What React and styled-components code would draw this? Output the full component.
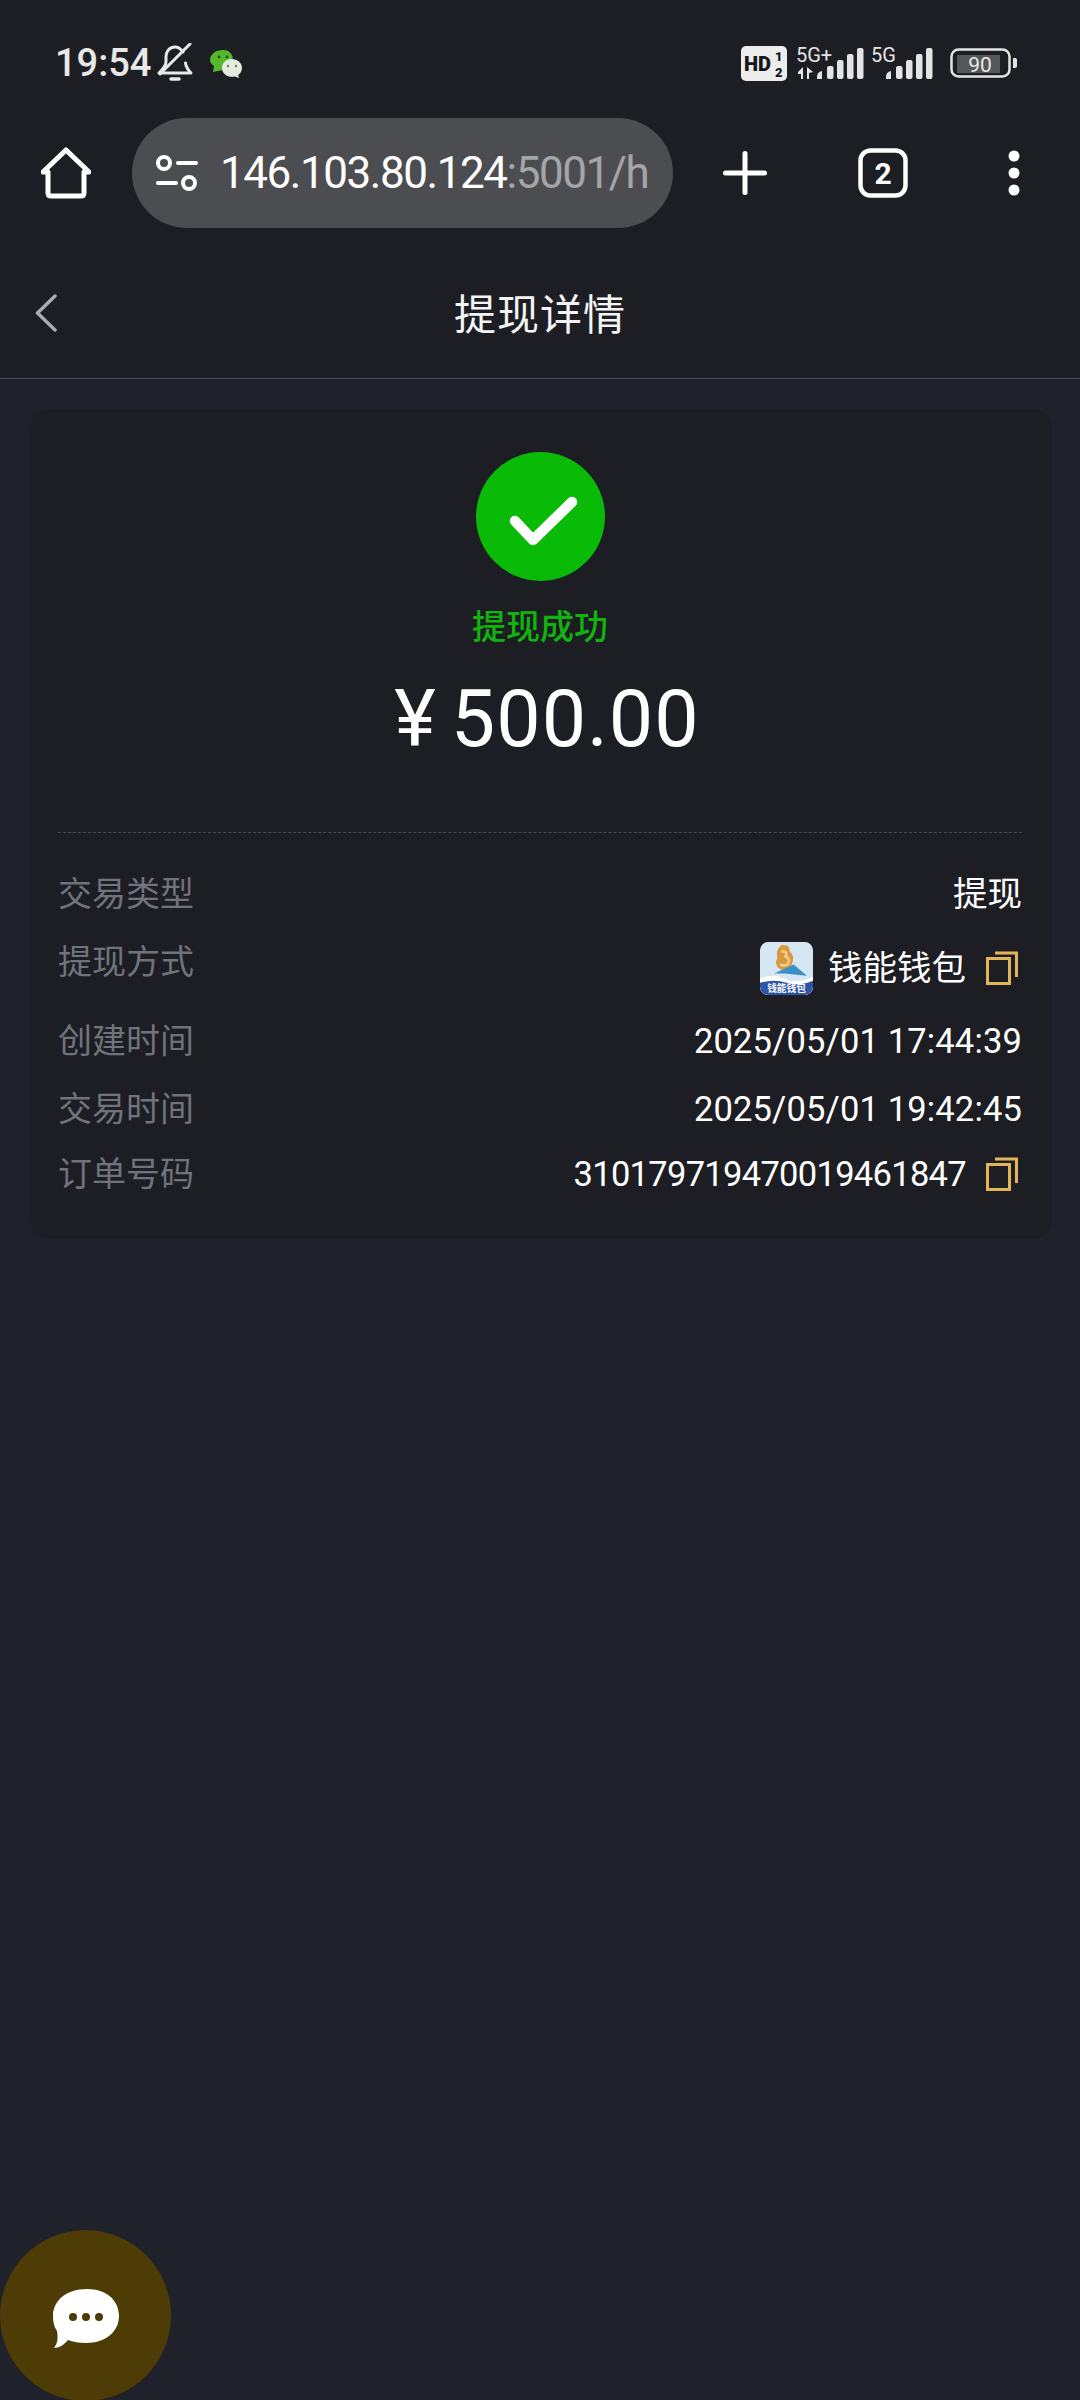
import React from 'react'
import styled, { createGlobalStyle } from 'styled-components'

const GlobalStyle = createGlobalStyle`
  html, body {
    margin: 0;
    padding: 0;
    background: #1f222a;
  }
  * {
    box-sizing: border-box;
  }
`

//스타일
const Page = styled.div`
  position: relative;
  width: 1080px;
  height: 2400px;
  overflow: hidden;
  background: #1f222a;
  color: #fff;
  font-family: Roboto, "Noto Sans CJK SC", sans-serif;
`
const TopChrome = styled.div`
  background: #1c1e23;
`
const StatusBar = styled.div`
  height: 118px;
  padding: 40px 62px 0 55px;
  display: flex;
  justify-content: space-between;
  align-items: flex-start;
`
const StatusLeft = styled.div`
  display: flex;
  align-items: center;
  gap: 6px;
  height: 46px;
`
const Clock = styled.span`
  font-size: 38px;
  font-weight: 500;
  color: #e8e8e8;
`
const WeChatSlot = styled.span`
  display: flex;
  margin-left: 10px;
  margin-top: 2px;
`
const StatusRight = styled.div`
  display: flex;
  align-items: flex-start;
  height: 46px;
  padding-top: 6px;
`
const StatusGlyph = styled.svg`
  flex-shrink: 0;
  overflow: visible;
  margin-left: ${p => p.$ml || 0}px;
  margin-top: ${p => p.$mt || 0}px;
`
const UrlToolbar = styled.div`
  height: 110px;
  display: flex;
  align-items: center;
  padding-left: 41px;
`
const IconSlot = styled.div`
  width: ${p => p.$w}px;
  display: flex;
  justify-content: center;
  align-items: center;
  flex-shrink: 0;
`
const AddressPill = styled.div`
  width: 541px;
  height: 110px;
  margin-left: 41px;
  padding: 0 20px 0 24px;
  border-radius: 55px;
  background: #4c4d51;
  display: flex;
  align-items: center;
  gap: 22px;
  overflow: hidden;
  svg {
    flex-shrink: 0;
  }
`
const UrlText = styled.span`
  font-size: 44px;
  white-space: nowrap;
  color: #fff;
  letter-spacing: -1.45px;
  span {
    color: #a4a5a8;
  }
`
const TitleBar = styled.div`
  height: 151px;
  padding-top: 16px;
  display: flex;
  align-items: center;
  justify-content: center;
  position: relative;
  border-bottom: 1px solid #4b4d52;
`
const BackBtn = styled.div`
  position: absolute;
  left: 35px;
  top: 66px;
  display: flex;
`
const Title = styled.h1`
  margin: 0;
  font-size: 42px;
  font-weight: 400;
  color: #f4f4f4;
  letter-spacing: 1px;
`
const Card = styled.section`
  margin: 30px 28px 0 30px;
  height: 830px;
  padding: 43px 30px 0 28px;
  border-radius: 20px;
  background: #1c1e23;
  display: flex;
  flex-direction: column;
`
const Hero = styled.div`
  display: flex;
  flex-direction: column;
  align-items: center;
  height: 381px;
  border-bottom: 1px dashed #494c52;
`
const SuccessIcon = styled.div`
  width: 129px;
  height: 129px;
  border-radius: 50%;
  background: #09bb07;
  display: flex;
`
const StatusText = styled.div`
  margin-top: 24px;
  font-size: 34px;
  font-weight: 500;
  line-height: 44px;
  color: #12b30e;
`
const Amount = styled.div`
  margin: 25px 0 0 14px;
  font-size: 79px;
  line-height: 90px;
  color: #fff;
  display: flex;
  align-items: baseline;
  gap: 14px;
  letter-spacing: 1px;
`
const Rows = styled.div`
  display: flex;
  flex-direction: column;
  padding-top: 28px;
`
const Row = styled.div`
  display: flex;
  justify-content: space-between;
  align-items: center;
  height: ${p => p.$h}px;
`
const Label = styled.span`
  font-size: 34px;
  line-height: 46px;
  color: #70737b;
  margin-top: ${p => p.$lift || 0}px;
`
const Value = styled.span`
  display: flex;
  align-items: center;
  gap: 20px;
  font-size: 34.5px;
  line-height: 46px;
  color: #fff;
  letter-spacing: ${p => p.$track || 0}px;
`
const LogoWrap = styled.span`
  display: flex;
  margin-right: -5px;
`
const CopyBtn = styled.span`
  display: flex;
  width: 32px;
  height: 34px;
  margin: 0 4px 0 0;
`
const Fab = styled.div`
  position: absolute;
  left: 0;
  top: 2230px;
  width: 171px;
  height: 171px;
  border-radius: 50%;
  background: #4e3c06;
  padding-top: 6px;
  display: flex;
  align-items: center;
  justify-content: center;
`

const BellOff = () => (
  <svg width="36" height="40" viewBox="0 0 36 40" fill="none" stroke="#e8e8e8" strokeWidth="3" strokeLinejoin="round" strokeLinecap="round">
    <path d="M26 9 C24 6 21 4 18 4 C12 4 9 9 9 14 V19 C9 23 6 26 2 30 H34 C31 27 29 24 28.500 20" />
    <path d="M3 31 L33 1" />
    <path d="M14 36 H22" strokeWidth="3.500" />
  </svg>
)

const WeChatDots = () => (
  <svg width="34" height="30" viewBox="0 0 34 30">
    <path d="M14 1 C21 1 24 6 24 11 C24 17 19 21 14 21 L4 23 L5 17 C2 15 1 13 1 11 C1 5 7 1 14 1 Z" fill="#55b82c" />
    <circle cx="10" cy="8" r="1.400" fill="#23501a" />
    <circle cx="18" cy="8" r="1.400" fill="#23501a" />
    <path d="M22 10 C29 10 33 14 33 19 C33 22 31 25 29 26 L30 29 L26 27.500 C19 29 13 25 13 19 C13 14 17 10 22 10 Z" fill="#e4eade" />
    <circle cx="19" cy="17" r="1.200" fill="#6f7a68" />
    <circle cx="27" cy="17" r="1.200" fill="#6f7a68" />
  </svg>
)

const HdBadge = () => (
  <StatusGlyph width="46" height="35" viewBox="0 0 46 35">
    <rect width="46" height="35" rx="5" fill="#ececec" />
    <text x="3" y="25" fontFamily="Roboto" fontWeight="900" fontSize="20" fill="#15161a">HD</text>
    <text x="34" y="15" fontFamily="Roboto" fontWeight="900" fontSize="13" fill="#15161a">1</text>
    <text x="34" y="31" fontFamily="Roboto" fontWeight="900" fontSize="13" fill="#15161a">2</text>
  </StatusGlyph>
)

const Bars = ({ x = 0 }) => (
  <g fill="#e4e4e4">
    <path d={`M${x} 34 q0 -5 5 -6 v8 h-5 z`} />
    <rect x={x + 10} y="23" width="6.500" height="13" rx="2" />
    <rect x={x + 20} y="17" width="6.500" height="19" rx="2" />
    <rect x={x + 30} y="11" width="6.500" height="25" rx="2" />
    <rect x={x + 40} y="5" width="6.500" height="31" rx="2" />
  </g>
)

const SignalOne = () => (
  <StatusGlyph width="68" height="40" viewBox="0 0 68 40" $ml={9} $mt={-3}>
    <text x="0" y="19" fontFamily="Roboto" fontSize="20" fill="#e4e4e4">5G+</text>
    <path d="M2 29 L7 24 V36 H5 V31 H2 Z M11 24 V36 H13 V30 L17 29 Z" fill="#e4e4e4" />
    <Bars x={21} />
  </StatusGlyph>
)

const SignalTwo = () => (
  <StatusGlyph width="62" height="40" viewBox="0 0 62 40" $ml={7} $mt={-3}>
    <text x="0" y="19" fontFamily="Roboto" fontSize="20" fill="#e4e4e4">5G</text>
    <Bars x={15} />
  </StatusGlyph>
)

const Battery = () => (
  <StatusGlyph width="68" height="32" viewBox="0 0 68 32" $ml={17} $mt={2}>
    <rect x="1.500" y="1.500" width="58" height="27" rx="7" fill="none" stroke="#e4e4e4" strokeWidth="2.500" />
    <rect x="7" y="7" width="43" height="18" fill="#55565a" />
    <text x="30" y="24" textAnchor="middle" fontFamily="Roboto" fontSize="21" fill="#e8e8e8">90</text>
    <path d="M63 10 h2 q2 0 2 2 v6 q0 2 -2 2 h-2 z" fill="#e4e4e4" />
  </StatusGlyph>
)

const HomeIcon = () => (
  <svg width="50" height="52" viewBox="0 0 50 52" fill="none" stroke="#fff" strokeWidth="5" strokeLinejoin="round" strokeLinecap="round">
    <path d="M2 25 L25 3 L48 25 H43 V46 Q43 49 40 49 H10 Q7 49 7 46 V25 Z" />
  </svg>
)

const SiteSettings = () => (
  <svg width="42" height="36" viewBox="0 0 42 36" fill="none" stroke="#fff" strokeWidth="4">
    <circle cx="8" cy="8" r="6" />
    <path d="M22 8 H40" strokeLinecap="round" />
    <circle cx="33" cy="28" r="6" />
    <path d="M2 28 H20" strokeLinecap="round" />
  </svg>
)

const PlusIcon = () => (
  <svg width="44" height="44" viewBox="0 0 44 44" stroke="#fff" strokeWidth="5" strokeLinecap="round">
    <path d="M22 2.500 V41.500 M2.500 22 H41.500" />
  </svg>
)

const TabsIcon = () => (
  <svg width="50" height="50" viewBox="0 0 50 50">
    <rect x="2.500" y="2.500" width="45" height="45" rx="10" fill="none" stroke="#fff" strokeWidth="4.500" />
    <text x="25" y="36" textAnchor="middle" fontFamily="Roboto" fontWeight="700" fontSize="30" fill="#fff">2</text>
  </svg>
)

const MoreIcon = () => (
  <svg width="12" height="46" viewBox="0 0 12 46" fill="#fff">
    <circle cx="6" cy="6" r="5.500" />
    <circle cx="6" cy="23" r="5.500" />
    <circle cx="6" cy="40" r="5.500" />
  </svg>
)

const BackIcon = () => (
  <svg width="22" height="38" viewBox="0 0 22 38" fill="none" stroke="#a9abae" strokeWidth="3.500" strokeLinecap="round" strokeLinejoin="round">
    <path d="M20 2 L2.500 19 L20 36" />
  </svg>
)

const CheckMark = () => (
  <svg width="129" height="129" viewBox="0 0 129 129" fill="none" stroke="#fff" strokeWidth="10.500" strokeLinecap="round" strokeLinejoin="round">
    <path d="M39 69 L57 88 L96 50" />
  </svg>
)

const CopyIcon = () => (
  <svg width="32" height="34" viewBox="0 0 32 34" fill="none" stroke="#e3b55a" strokeWidth="3">
    <rect x="1.500" y="7.500" width="22" height="25" />
    <path d="M9 2 H30.500 V26" />
  </svg>
)

// 钱包 앱 아이콘
const WalletLogo = () => (
  <svg width="53" height="53" viewBox="0 0 52 52">
    <defs>
      <clipPath id="logo-clip">
        <rect width="52" height="52" rx="8" />
      </clipPath>
    </defs>
    <g clipPath="url(#logo-clip)">
      <rect width="52" height="52" fill="#d6e7f4" />
      <path d="M21 3 Q30 2 29 9 Q35 14 31 22 Q29 29 20 27 Q13 22 17 16 Q15 8 21 3 Z" fill="#d99a3e" />
      <path d="M21 9 Q28 9 25 14 Q31 17 27 22 Q23 24 20 22" fill="none" stroke="#f5d08a" strokeWidth="2.500" />
      <path d="M14 31 L33 22 L46 33 L24 31 Z" fill="#3a8fc9" />
      <path d="M0 36 Q12 30 24 36 T52 34 V52 H0 Z" fill="#fff" />
      <path d="M0 40 Q14 36 26 40 T52 38 V52 H0 Z" fill="#2c55a8" />
      <text x="26" y="49.500" textAnchor="middle" fontFamily="Noto Sans CJK SC" fontWeight="700" fontSize="9.500" fill="#fff">钱能钱包</text>
    </g>
  </svg>
)

const ChatBubble = () => (
  <svg width="66" height="59" viewBox="0 0 66 59">
    <path d="M34 0 C53 0 66 11 66 27 C66 43 52 54 33 54 C26 54 20 53 15 51 C11 56 6 59 1 59 C5 54 5 48 4 42 C1 38 0 33 0 27 C0 11 14 0 34 0 Z" fill="#fff" />
    <circle cx="20" cy="28" r="4" fill="#4e3c06" />
    <circle cx="33" cy="28" r="4" fill="#4e3c06" />
    <circle cx="46" cy="28" r="4" fill="#4e3c06" />
  </svg>
)

const App = () => {
  return (
    <Page>
      <GlobalStyle />
      <TopChrome>
        <StatusBar>
          <StatusLeft>
            <Clock>19:54</Clock>
            <BellOff />
            <WeChatSlot><WeChatDots /></WeChatSlot>
          </StatusLeft>
          <StatusRight>
            <HdBadge />
            <SignalOne />
            <SignalTwo />
            <Battery />
          </StatusRight>
        </StatusBar>
        <UrlToolbar>
          <HomeIcon />
          <AddressPill>
            <SiteSettings />
            <UrlText>146.103.80.124<span>:5001/h</span></UrlText>
          </AddressPill>
          <IconSlot $w={144}><PlusIcon /></IconSlot>
          <IconSlot $w={132}><TabsIcon /></IconSlot>
          <IconSlot $w={130}><MoreIcon /></IconSlot>
        </UrlToolbar>
        <TitleBar>
          <BackBtn><BackIcon /></BackBtn>
          <Title>提现详情</Title>
        </TitleBar>
      </TopChrome>
      <Card>
        <Hero>
          <SuccessIcon><CheckMark /></SuccessIcon>
          <StatusText>提现成功</StatusText>
          <Amount><span>¥</span><span>500.00</span></Amount>
        </Hero>
        <Rows>
          <Row $h={66}><Label>交易类型</Label><Value>提现</Value></Row>
          <Row $h={82}>
            <Label $lift={-12}>提现方式</Label>
            <Value><LogoWrap><WalletLogo /></LogoWrap>钱能钱包<CopyBtn><CopyIcon /></CopyBtn></Value>
          </Row>
          <Row $h={64}><Label>创建时间</Label><Value $track={0.15}>2025/05/01 17:44:39</Value></Row>
          <Row $h={72}><Label>交易时间</Label><Value $track={0.15}>2025/05/01 19:42:45</Value></Row>
          <Row $h={58}>
            <Label>订单号码</Label>
            <Value $track={-0.7}>310179719470019461847<CopyBtn><CopyIcon /></CopyBtn></Value>
          </Row>
        </Rows>
      </Card>
      <Fab><ChatBubble /></Fab>
    </Page>
  )
}

export default App
